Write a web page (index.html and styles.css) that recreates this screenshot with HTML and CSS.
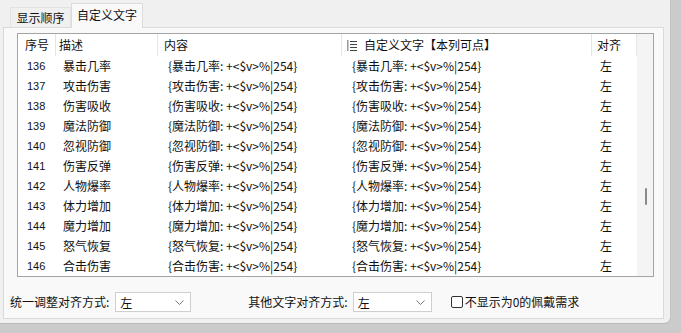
FILE: index.html
```html
<!DOCTYPE html>
<html lang="zh">
<head>
<meta charset="utf-8">
<link rel="stylesheet" href="styles.css">
</head>
<body>
<div class="window">
  <div class="tabs">
    <div class="tab">显示顺序</div>
    <div class="tab active">自定义文字</div>
  </div>
  <div class="panel">
    <div class="list">
      <div class="table">
        <div class="row head">
          <div class="c1">序号</div>
          <div class="c2">描述</div>
          <div class="c3">内容</div>
          <div class="c4"><svg class="sorticon" width="11" height="11" viewBox="0 0 11 11"><rect x="0" y="0" width="1.5" height="11" fill="#9a9a9a"/><rect x="3" y="1" width="7" height="1" fill="#444"/><rect x="3" y="4" width="7" height="1" fill="#444"/><rect x="3" y="7" width="7" height="1" fill="#444"/><rect x="3" y="10" width="7" height="1" fill="#444"/></svg>自定义文字【本列可点】</div>
          <div class="c5">对齐</div>
        </div>
        <div class="row"><div class="c1 num">136</div><div class="c2">暴击几率</div><div class="c3">{暴击几率: +&lt;$v&gt;%|254}</div><div class="c4">{暴击几率: +&lt;$v&gt;%|254}</div><div class="c5">左</div></div>
        <div class="row"><div class="c1 num">137</div><div class="c2">攻击伤害</div><div class="c3">{攻击伤害: +&lt;$v&gt;%|254}</div><div class="c4">{攻击伤害: +&lt;$v&gt;%|254}</div><div class="c5">左</div></div>
        <div class="row"><div class="c1 num">138</div><div class="c2">伤害吸收</div><div class="c3">{伤害吸收: +&lt;$v&gt;%|254}</div><div class="c4">{伤害吸收: +&lt;$v&gt;%|254}</div><div class="c5">左</div></div>
        <div class="row"><div class="c1 num">139</div><div class="c2">魔法防御</div><div class="c3">{魔法防御: +&lt;$v&gt;%|254}</div><div class="c4">{魔法防御: +&lt;$v&gt;%|254}</div><div class="c5">左</div></div>
        <div class="row"><div class="c1 num">140</div><div class="c2">忽视防御</div><div class="c3">{忽视防御: +&lt;$v&gt;%|254}</div><div class="c4">{忽视防御: +&lt;$v&gt;%|254}</div><div class="c5">左</div></div>
        <div class="row"><div class="c1 num">141</div><div class="c2">伤害反弹</div><div class="c3">{伤害反弹: +&lt;$v&gt;%|254}</div><div class="c4">{伤害反弹: +&lt;$v&gt;%|254}</div><div class="c5">左</div></div>
        <div class="row"><div class="c1 num">142</div><div class="c2">人物爆率</div><div class="c3">{人物爆率: +&lt;$v&gt;%|254}</div><div class="c4">{人物爆率: +&lt;$v&gt;%|254}</div><div class="c5">左</div></div>
        <div class="row"><div class="c1 num">143</div><div class="c2">体力增加</div><div class="c3">{体力增加: +&lt;$v&gt;%|254}</div><div class="c4">{体力增加: +&lt;$v&gt;%|254}</div><div class="c5">左</div></div>
        <div class="row"><div class="c1 num">144</div><div class="c2">魔力增加</div><div class="c3">{魔力增加: +&lt;$v&gt;%|254}</div><div class="c4">{魔力增加: +&lt;$v&gt;%|254}</div><div class="c5">左</div></div>
        <div class="row"><div class="c1 num">145</div><div class="c2">怒气恢复</div><div class="c3">{怒气恢复: +&lt;$v&gt;%|254}</div><div class="c4">{怒气恢复: +&lt;$v&gt;%|254}</div><div class="c5">左</div></div>
        <div class="row"><div class="c1 num">146</div><div class="c2">合击伤害</div><div class="c3">{合击伤害: +&lt;$v&gt;%|254}</div><div class="c4">{合击伤害: +&lt;$v&gt;%|254}</div><div class="c5">左</div></div>
      </div>
      <div class="scrollbar"><div class="thumb"></div></div>
    </div>
    <div class="controls">
      <span class="label">统一调整对齐方式:</span>
      <div class="select s1"><span>左</span><svg class="chev" width="9" height="5" viewBox="0 0 9 5"><path d="M0.5 0.5 L4.5 4.5 L8.5 0.5" fill="none" stroke="#777" stroke-width="1"/></svg></div>
      <span class="label l2">其他文字对齐方式:</span>
      <div class="select s2"><span>左</span><svg class="chev" width="9" height="5" viewBox="0 0 9 5"><path d="M0.5 0.5 L4.5 4.5 L8.5 0.5" fill="none" stroke="#777" stroke-width="1"/></svg></div>
      <span class="check"></span>
      <span class="label">不显示为0的佩戴需求</span>
    </div>
  </div>
</div>
</body>
</html>
```

FILE: styles.css
```css
html, body {
  margin: 0;
  padding: 0;
}
body {
  width: 681px;
  height: 333px;
  overflow: hidden;
  background: #cbcbcb;
  font-family: "Noto Sans CJK SC", "Noto Sans", sans-serif;
  font-size: 12px;
  color: #111;
}
.window {
  box-sizing: border-box;
  width: 671px;
  height: 324px;
  background: #f0f0f0;
  border-right: 1px solid #c4c4c4;
  border-bottom: 1px solid #b8b8b8;
  border-bottom-right-radius: 7px;
  padding: 3px 0 0 3px;
}
.tabs {
  display: flex;
  align-items: flex-end;
  height: 24px;
  padding-left: 7px;
}
.tab {
  box-sizing: border-box;
  height: 20px;
  width: 61px;
  display: flex;
  align-items: center;
  justify-content: center;
  border: 1px solid #e2e2e2;
  border-bottom: none;
  background: #f0f0f0;
  line-height: 1;
}
.tab.active {
  height: 25px;
  width: 72px;
  margin-bottom: -1px;
  background: #f9f9f9;
  border-color: #dcdcdc;
  position: relative;
  z-index: 1;
  padding-bottom: 2px;
}
.panel {
  box-sizing: border-box;
  width: 661px;
  height: 292px;
  background: #f9f9f9;
  border: 1px solid #dadada;
  padding: 5px 0 0 6px;
}
.list {
  margin-left: 7px;
  width: 637px;
  box-sizing: border-box;
  border: 1px solid #a4a4a4;
  background: #fff;
  display: flex;
}
.table {
  width: 619px;
}
.row {
  display: grid;
  grid-template-columns: 38px 102px 184px 250px 45px;
  height: 20px;
  align-items: center;
  white-space: nowrap;
}
.row > div {
  overflow: hidden;
  line-height: 20px;
}
.row .c1 { padding-left: 9px; }
.row .c2 { padding-left: 7px; }
.row .c3 { padding-left: 10px; }
.row .c4 { padding-left: 10px; }
.row .c5 { padding-left: 8px; }
.row.head {
  height: 22px;
}
.row.head > div {
  line-height: 22px;
  height: 22px;
  border-right: 1px solid #e5e5e5;
  box-sizing: border-box;
  display: flex;
  align-items: center;
}
.row.head .c1 { padding-left: 7px; }
.row.head .c2 { padding-left: 3px; }
.row.head .c3 { padding-left: 6px; }
.row.head .c4 { padding-left: 5px; }
.row.head .c5 { padding-left: 5px; }
.sorticon {
  margin-right: 6px;
}
.num {
  font-family: "Liberation Sans", sans-serif;
  font-size: 11px;
}
.scrollbar {
  width: 16px;
  background: #f4f4f4;
  position: relative;
}
.thumb {
  position: absolute;
  left: 8px;
  top: 154px;
  width: 2px;
  height: 17px;
  border-radius: 1px;
  background: #8a8a8a;
}
.controls {
  display: flex;
  align-items: center;
  height: 20px;
  margin-top: 15px;
  white-space: nowrap;
}
.label {
  line-height: 20px;
}
.select {
  box-sizing: border-box;
  height: 20px;
  background: #fff;
  border: 1px solid #cfcfcf;
  display: flex;
  align-items: center;
  justify-content: space-between;
  padding: 0 6px 0 4px;
  margin-left: 6px;
}
.s1 { width: 76px; }
.s2 { width: 79px; margin-left: 5px; }
.l2 { margin-left: 57px; }
.chev { margin-top: 1px; }
.check {
  box-sizing: border-box;
  width: 12px;
  height: 12px;
  border: 1px solid #333;
  border-radius: 2px;
  background: #fff;
  margin-left: 19px;
  margin-right: 2px;
}
```
